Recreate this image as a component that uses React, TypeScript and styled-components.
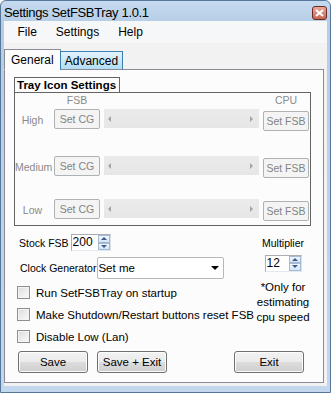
import React from "react";
import styled, { createGlobalStyle } from "styled-components";

const GlobalStyle = createGlobalStyle`
  html, body { margin: 0; padding: 0; background: #ffffff; }
  body { font-family: "Liberation Sans", Arial, sans-serif; color: #000; }
`;

const Window = styled.div`
  width: 331px;
  height: 393px;
  box-sizing: border-box;
  display: flex;
  flex-direction: column;
  background: linear-gradient(#c5daef, #b6cde6 22px, #c3d8ee);
  border: 1px solid #57779a;
  border-radius: 6px 6px 0 0;
  padding: 0 3px 6px 3px;
`;

const TitleBar = styled.div`
  height: 20px;
  display: flex;
  align-items: center;
  justify-content: space-between;
`;

const Title = styled.span`
  font-size: 13px;
  letter-spacing: -0.35px;
  color: #000;
  padding-top: 2px;
`;

const CloseButton = styled.div`
  width: 15px;
  height: 14px;
  box-sizing: border-box;
  margin-top: 4px;
  border: 1px solid #6d2a25;
  border-radius: 3px;
  background: linear-gradient(#e9a99b, #c8644f);
  display: flex;
  align-items: center;
  justify-content: center;
`;

const Client = styled.div`
  flex: 1;
  display: flex;
  flex-direction: column;
  background: #f2f2f2;
`;

const MenuBar = styled.div`
  height: 22px;
  display: flex;
  align-items: center;
  padding-left: 4px;
  background: #f6f7f8;
`;

const MenuItem = styled.span`
  font-size: 12px;
  padding: 0 9.5px;
`;

const TabArea = styled.div`
  flex: 1;
  display: flex;
  flex-direction: column;
  padding: 7px 3px 3px 0;
`;

const TabStrip = styled.div`
  height: 20px;
  display: flex;
  align-items: flex-end;
  margin-bottom: -1px;
  position: relative;
  z-index: 1;
`;

const Tab = styled.div<{ $active?: boolean }>`
  box-sizing: border-box;
  height: ${(p) => (p.$active ? "21px" : "19px")};
  padding: 0 ${(p) => (p.$active ? "6px" : "4px")};
  font-size: 12px;
  display: flex;
  align-items: center;
  border: 1px solid ${(p) => (p.$active ? "#898c95" : "#3c7fb1")};
  border-bottom: ${(p) => (p.$active ? "1px solid #fcfcfc" : "1px solid #898c95")};
  background: ${(p) =>
    p.$active ? "#fcfcfc" : "linear-gradient(#e3f3fc, #b2ddf5)"};
  margin-left: ${(p) => (p.$active ? "0" : "-1px")};
`;

const Panel = styled.div`
  flex: 1;
  box-sizing: border-box;
  border: 1px solid #898c95;
  background: #fcfcfc;
  padding: 7px 0 0 9px;
  display: flex;
  flex-direction: column;
`;

const GroupLabel = styled.div`
  width: 106px;
  height: 15px;
  box-sizing: border-box;
  border: 1px solid #646464;
  border-bottom: none;
  font-size: 11.5px;
  font-weight: bold;
  padding-left: 2px;
  line-height: 14px;
`;

const GroupBox = styled.div`
  width: 297px;
  box-sizing: border-box;
  border: 1px solid #646464;
  padding: 0 0 4px 0;
  display: flex;
  flex-direction: column;
`;

const SliderRow = styled.div<{ $mt: number; $h: number }>`
  display: grid;
  grid-template-columns: 35px 46px 155px 46px;
  column-gap: 4px;
  height: ${(p) => p.$h}px;
  margin-top: ${(p) => p.$mt}px;
  align-items: start;
`;

const GrayLabel = styled.span`
  font-size: 10.5px;
  color: #8a8a8a;
  text-align: center;
  white-space: nowrap;
  align-self: center;
`;

const DisabledButton = styled.div<{ $mt?: number }>`
  box-sizing: border-box;
  height: 20px;
  margin-top: ${(p) => p.$mt || 0}px;
  border: 1px solid #adb2b5;
  border-radius: 2px;
  background: #f4f4f4;
  color: #838383;
  font-size: 10.5px;
  display: flex;
  align-items: center;
  justify-content: center;
  white-space: nowrap;
`;

const Track = styled.div`
  height: 19px;
  background: linear-gradient(#ebebeb, #e6e6e6);
  display: flex;
  align-items: center;
  justify-content: space-between;
  padding: 0 6px 0 4px;
`;

const Arrow = styled.span<{ $dir: "left" | "right" }>`
  width: 0;
  height: 0;
  border-top: 3px solid transparent;
  border-bottom: 3px solid transparent;
  ${(p) =>
    p.$dir === "left"
      ? "border-right: 3px solid #a4a4a4;"
      : "border-left: 3px solid #a4a4a4;"}
`;

const Lower = styled.div`
  display: flex;
  flex-direction: column;
  margin: 8px 0 0 3px;
`;

const Columns = styled.div`
  display: flex;
`;

const LeftCol = styled.div`
  width: 207px;
  display: flex;
  flex-direction: column;
`;

const RightCol = styled.div`
  width: 50px;
  margin-left: 34px;
  display: flex;
  flex-direction: column;
  align-items: center;
`;

const InlineRow = styled.div<{ $h: number; $mt?: number }>`
  height: ${(p) => p.$h}px;
  margin-top: ${(p) => p.$mt || 0}px;
  display: flex;
  align-items: center;
`;

const FieldLabel = styled.span<{ $pl?: number; $pr?: number }>`
  font-size: 10.5px;
  padding-left: ${(p) => p.$pl || 0}px;
  padding-right: ${(p) => p.$pr || 0}px;
  white-space: nowrap;
`;

const SpinBox = styled.div<{ $w: number }>`
  width: ${(p) => p.$w}px;
  height: 17px;
  box-sizing: border-box;
  border: 1px solid #abadb3;
  border-right-color: #dbdfe6;
  border-bottom-color: #e3e9ef;
  background: #fff;
  display: flex;
  align-items: stretch;
  font-size: 12px;
`;

const SpinValue = styled.span`
  flex: 1;
  padding-left: 1px;
  line-height: 15px;
`;

const SpinButtons = styled.div`
  width: 12px;
  display: flex;
  flex-direction: column;
`;

const SpinBtn = styled.div`
  flex: 1;
  box-sizing: border-box;
  border: 1px solid #a3bad4;
  background: linear-gradient(#f1f7fd, #d5e5f6);
  display: flex;
  align-items: center;
  justify-content: center;
`;

const SpinArrow = styled.span<{ $up?: boolean }>`
  width: 0;
  height: 0;
  border-left: 3px solid transparent;
  border-right: 3px solid transparent;
  ${(p) =>
    p.$up ? "border-bottom: 3px solid #3d5a86;" : "border-top: 3px solid #3d5a86;"}
`;

const Combo = styled.div`
  width: 127px;
  height: 22px;
  box-sizing: border-box;
  border: 1px solid #b8b8b8;
  border-radius: 2px;
  background: #fff;
  display: flex;
  align-items: center;
  justify-content: space-between;
  font-size: 11.5px;
  padding: 0 4px 0 0;
`;

const ComboArrow = styled.span`
  width: 0;
  height: 0;
  border-left: 4px solid transparent;
  border-right: 4px solid transparent;
  border-top: 4px solid #000;
`;

const CheckRow = styled.div<{ $mt: number }>`
  display: flex;
  align-items: center;
  gap: 6px;
  height: 13px;
  margin-top: ${(p) => p.$mt}px;
  font-size: 11.5px;
  white-space: nowrap;
`;

const CheckBox = styled.span`
  width: 13px;
  height: 13px;
  box-sizing: border-box;
  border: 1px solid #8f8f8f;
  background: linear-gradient(135deg, #dcdcdc, #fbfbfb);
  box-shadow: inset 0 0 0 1px #f4f4f4;
  flex: none;
`;

const Note = styled.div`
  margin-top: 9px;
  font-size: 11.5px;
  line-height: 15px;
  text-align: center;
  white-space: nowrap;
`;

const ButtonRow = styled.div`
  display: flex;
  margin-top: 8px;
  margin-left: 1px;
`;

const PushButton = styled.div<{ $ml?: number }>`
  width: 70px;
  height: 22px;
  box-sizing: border-box;
  margin-left: ${(p) => p.$ml || 0}px;
  border: 1px solid #707070;
  border-radius: 3px;
  background: linear-gradient(#f2f2f2 0%, #ebebeb 50%, #dddddd 50%, #cfcfcf 100%);
  box-shadow: inset 0 0 0 1px #fcfcfc;
  font-size: 11.5px;
  display: flex;
  align-items: center;
  justify-content: center;
`;

function Spinner({ value, width }: { value: string; width: number }) {
  return (
    <SpinBox $w={width}>
      <SpinValue>{value}</SpinValue>
      <SpinButtons>
        <SpinBtn>
          <SpinArrow $up />
        </SpinBtn>
        <SpinBtn>
          <SpinArrow />
        </SpinBtn>
      </SpinButtons>
    </SpinBox>
  );
}

const levels = [
  { name: "High", mt: 2 },
  { name: "Medium", mt: 25 },
  { name: "Low", mt: 21 },
];

export default function App() {
  return (
    <>
      <GlobalStyle />
      <Window>
        <TitleBar>
          <Title>Settings SetFSBTray 1.0.1</Title>
          <CloseButton>
            <svg width="9" height="8" viewBox="0 0 9 8">
              <path d="M1 1 L8 7 M8 1 L1 7" stroke="#fff" strokeWidth="2" />
            </svg>
          </CloseButton>
        </TitleBar>
        <Client>
          <MenuBar>
            <MenuItem>File</MenuItem>
            <MenuItem>Settings</MenuItem>
            <MenuItem>Help</MenuItem>
          </MenuBar>
          <TabArea>
            <TabStrip>
              <Tab $active>General</Tab>
              <Tab>Advanced</Tab>
            </TabStrip>
            <Panel>
              <GroupLabel>Tray Icon Settings</GroupLabel>
              <GroupBox>
                <SliderRow $mt={0} $h={14}>
                  <span />
                  <GrayLabel>FSB</GrayLabel>
                  <span />
                  <GrayLabel>CPU</GrayLabel>
                </SliderRow>
                {levels.map((l) => (
                  <SliderRow key={l.name} $mt={l.mt} $h={22}>
                    <GrayLabel>{l.name}</GrayLabel>
                    <DisabledButton>Set CG</DisabledButton>
                    <Track>
                      <Arrow $dir="left" />
                      <Arrow $dir="right" />
                    </Track>
                    <DisabledButton $mt={2}>Set FSB</DisabledButton>
                  </SliderRow>
                ))}
              </GroupBox>
              <Lower>
                <Columns>
                  <LeftCol>
                    <InlineRow $h={17}>
                      <FieldLabel $pl={2} $pr={2}>Stock FSB</FieldLabel>
                      <Spinner value="200" width={40} />
                    </InlineRow>
                    <InlineRow $h={22} $mt={6}>
                      <FieldLabel $pl={3} $pr={1}>Clock Generator</FieldLabel>
                      <Combo>
                        <span>Set me</span>
                        <ComboArrow />
                      </Combo>
                    </InlineRow>
                    <CheckRow $mt={7}>
                      <CheckBox />
                      Run SetFSBTray on startup
                    </CheckRow>
                    <CheckRow $mt={9}>
                      <CheckBox />
                      Make Shutdown/Restart buttons reset FSB
                    </CheckRow>
                    <CheckRow $mt={9}>
                      <CheckBox />
                      Disable Low (Lan)
                    </CheckRow>
                  </LeftCol>
                  <RightCol>
                    <InlineRow $h={17}>
                      <FieldLabel>Multiplier</FieldLabel>
                    </InlineRow>
                    <InlineRow $h={16} $mt={4}>
                      <Spinner value="12" width={37} />
                    </InlineRow>
                    <Note>
                      *Only for
                      <br />
                      estimating
                      <br />
                      cpu speed
                    </Note>
                  </RightCol>
                </Columns>
                <ButtonRow>
                  <PushButton>Save</PushButton>
                  <PushButton $ml={9}>Save + Exit</PushButton>
                  <PushButton $ml={67}>Exit</PushButton>
                </ButtonRow>
              </Lower>
            </Panel>
          </TabArea>
        </Client>
      </Window>
    </>
  );
}
